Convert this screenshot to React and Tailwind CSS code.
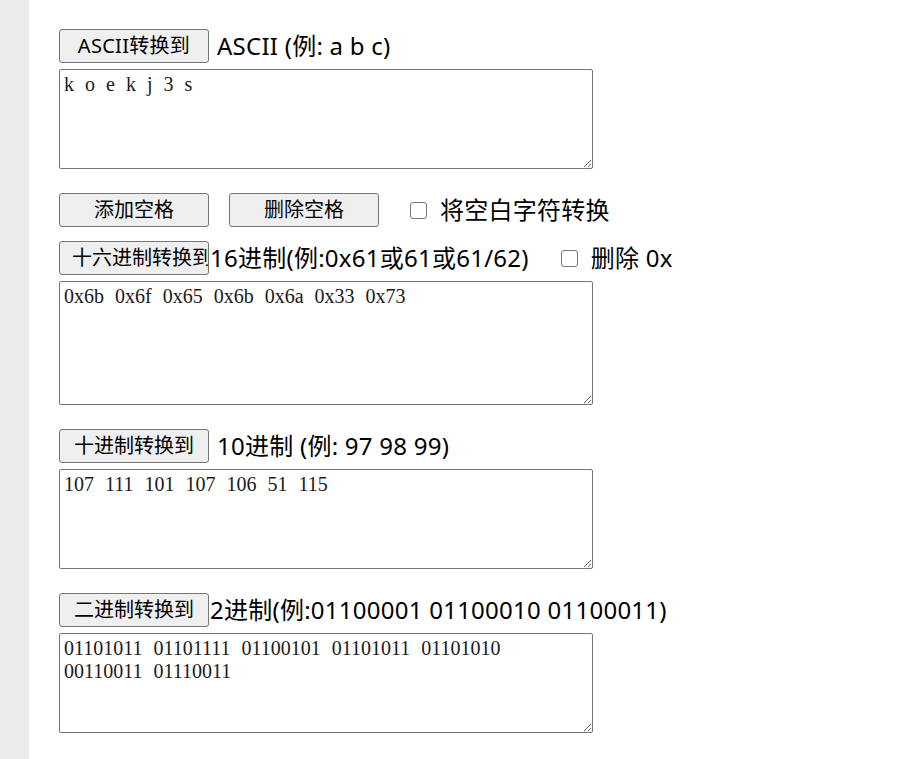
import React, { useState } from 'react';

const LABEL_FONT = { fontFamily: '"Noto Sans", "Noto Sans CJK SC", sans-serif' };
const AREA_FONT = { fontFamily: '"Liberation Serif", "Noto Sans CJK SC", serif', wordSpacing: '6px' };

function Btn({ children, className = '' }) {
  return (
    <button
      className={`h-[34px] w-[150px] shrink-0 overflow-hidden whitespace-nowrap rounded-[3px] border border-[#767676] bg-[#efefef] text-[20px] leading-none text-black ${className}`}
      style={LABEL_FONT}
    >
      {children}
    </button>
  );
}

function Check({ className = '' }) {
  return (
    <span className={`inline-block h-[17px] w-[17px] shrink-0 rounded-[3px] border border-[#767676] bg-white ${className}`} />
  );
}

function Label({ children, className = '' }) {
  return <span className={`text-[24px] tracking-[0.25px] ${className}`}>{children}</span>;
}

function Area({ value, h }) {
  return (
    <textarea
      defaultValue={value}
      className={`block w-[534px] ${h} rounded-[2px] border border-[#767676] bg-white pl-[4px] pr-[8px] py-[3px] text-[20px] leading-[23px] text-[#1a1a1a] outline-none`}
      style={AREA_FONT}
    />
  );
}

export default function App() {
  const [ascii] = useState('k o e k j 3 s');
  return (
    <div className="flex min-h-screen bg-white" style={LABEL_FONT}>
      <div className="w-[29px] shrink-0 bg-[#ebebeb]" />
      <div className="pl-[30px] pt-[29px] text-black">
        {/* ASCII */}
        <div className="flex h-[34px] items-center">
          <Btn className="px-[9px] tracking-[0.3px]">ASCII转换到</Btn>
          <Label className="ml-[8px]">ASCII (例: a b c)</Label>
        </div>
        <div className="mt-[6px]">
          <Area value={ascii} h="h-[100px]" />
        </div>

        {/* spaces */}
        <div className="mt-[24px] flex h-[34px] items-center">
          <Btn className="px-[9px]">添加空格</Btn>
          <Btn className="ml-[20px] px-[9px]">删除空格</Btn>
          <Check className="ml-[31px]" />
          <Label className="ml-[13px]">将空白字符转换</Label>
        </div>

        {/* hex */}
        <div className="mt-[14px] flex h-[34px] items-center">
          <Btn className="pl-[12px] text-left">十六进制转换到</Btn>
          <Label className="ml-[1px]">16进制(例:0x61或61或61/62)</Label>
          <Check className="ml-[32px]" />
          <Label className="ml-[13px]">删除 0x</Label>
        </div>
        <div className="mt-[6px]">
          <Area value="0x6b 0x6f 0x65 0x6b 0x6a 0x33 0x73" h="h-[124px]" />
        </div>

        {/* dec */}
        <div className="mt-[24px] flex h-[34px] items-center">
          <Btn className="px-[9px]">十进制转换到</Btn>
          <Label className="ml-[8px]">10进制 (例: 97 98 99)</Label>
        </div>
        <div className="mt-[6px]">
          <Area value="107 111 101 107 106 51 115" h="h-[100px]" />
        </div>

        {/* bin */}
        <div className="mt-[24px] flex h-[34px] items-center">
          <Btn className="px-[9px]">二进制转换到</Btn>
          <Label className="ml-[1px]">2进制(例:01100001 01100010 01100011)</Label>
        </div>
        <div className="mt-[6px]">
          <Area value="01101011 01101111 01100101 01101011 01101010 00110011 01110011" h="h-[100px]" />
        </div>
      </div>
    </div>
  );
}
